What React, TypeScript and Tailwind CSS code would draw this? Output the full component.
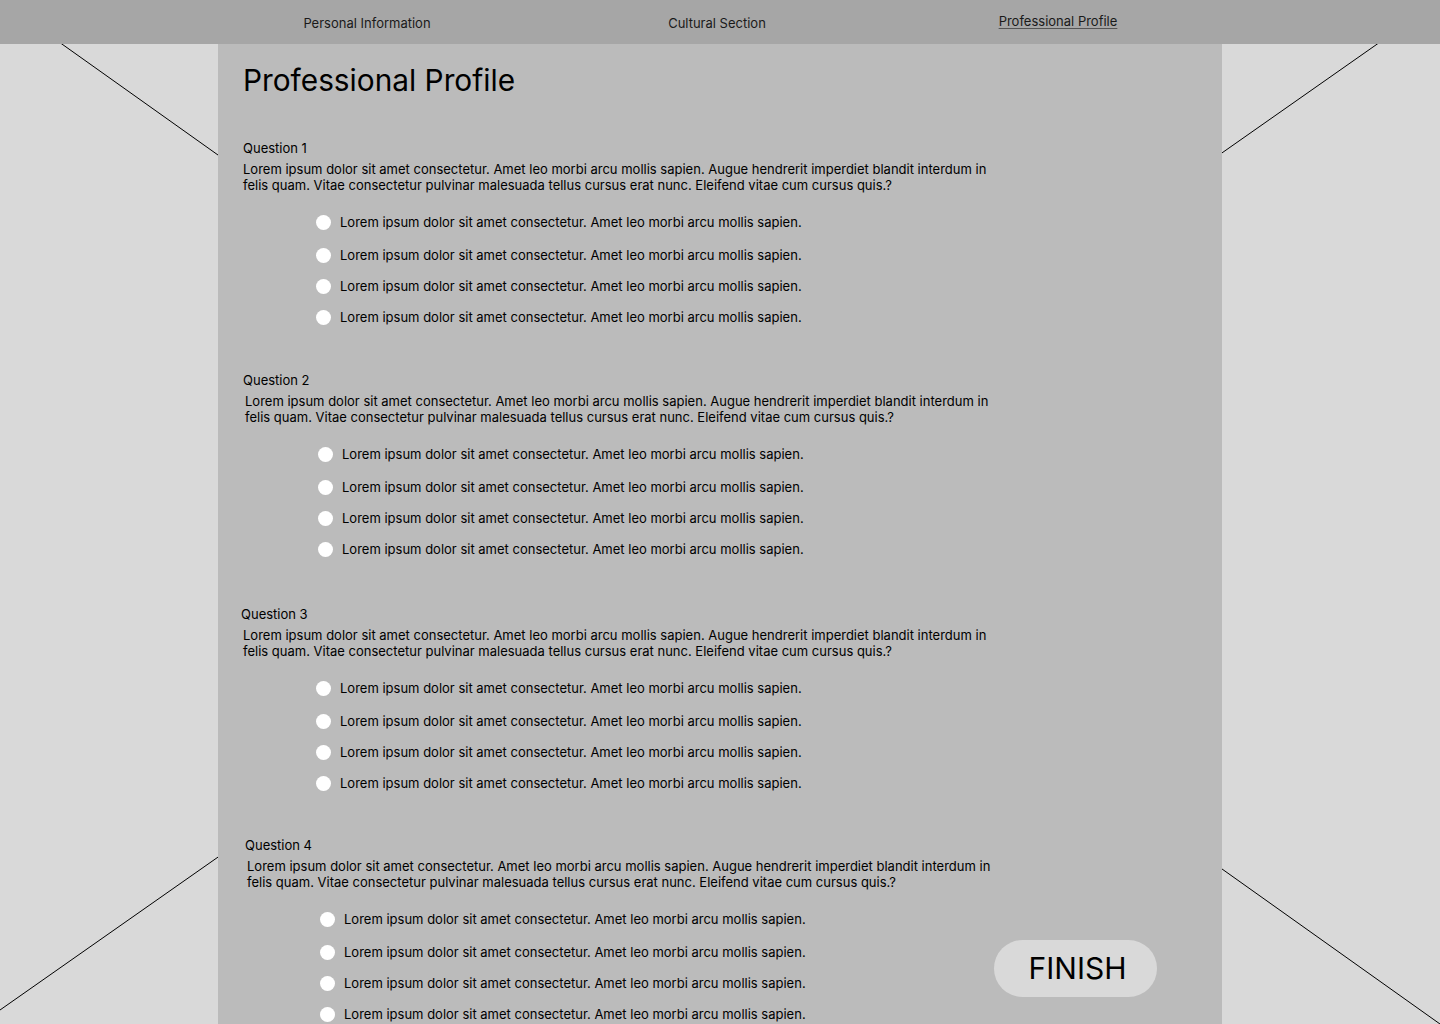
import React from 'react';

interface Question {
  label: string;
  labelX: number;
  textX: number;
  optionX: number;
  gapBefore: number;
}

const questionText = [
  'Lorem ipsum dolor sit amet consectetur. Amet leo morbi arcu mollis sapien. Augue hendrerit imperdiet blandit interdum in',
  'felis quam. Vitae consectetur pulvinar malesuada tellus cursus erat nunc. Eleifend vitae cum cursus quis.?',
];

const optionText = 'Lorem ipsum dolor sit amet consectetur. Amet leo morbi arcu mollis sapien.';

const questions: Question[] = [
  { label: 'Question 1', labelX: 0, textX: 0, optionX: 73, gapBefore: 42 },
  { label: 'Question 2', labelX: 0, textX: 2, optionX: 75, gapBefore: 47 },
  { label: 'Question 3', labelX: -2, textX: 0, optionX: 73, gapBefore: 49 },
  { label: 'Question 4', labelX: 2, textX: 4, optionX: 77, gapBefore: 46 },
];

const Options = ({ x }: { x: number }) => (
  <div className="flex flex-col mt-[21px]" style={{ marginLeft: x }}>
    {[0, 1, 2, 3].map((i) => (
      <label
        key={i}
        className={`flex items-center h-4 gap-[9px] ${i === 1 ? 'mt-[17px]' : i > 1 ? 'mt-[15px]' : ''}`}
      >
        <span className="w-[15px] h-[15px] rounded-full bg-white shrink-0" />
        <span className="text-[13px] leading-4 text-black whitespace-nowrap">{optionText}</span>
      </label>
    ))}
  </div>
);

const QuestionBlock = ({ q }: { q: Question }) => (
  <div className="flex flex-col">
    <p className="text-[13px] leading-4 text-black" style={{ marginLeft: q.labelX }}>
      {q.label}
    </p>
    <p className="mt-[5px] text-[13px] leading-4 text-black" style={{ marginLeft: q.textX }}>
      {questionText.map((line) => (
        <span key={line} className="block whitespace-nowrap">
          {line}
        </span>
      ))}
    </p>
    <Options x={q.optionX} />
  </div>
);

const App = () => {
  return (
    <div
      className="relative w-full h-[1024px] overflow-hidden bg-[#d9d9d9]"
      style={{ fontFamily: 'Inter, "Noto Sans", sans-serif' }}
    >
      {/* image placeholder cross */}
      <svg className="absolute inset-0" width="1440" height="1024" viewBox="0 0 1440 1024">
        <line x1="0" y1="0" x2="1440" y2="1024" stroke="#000" strokeWidth="1" />
        <line x1="0" y1="1010" x2="1440" y2="0" stroke="#000" strokeWidth="1" />
      </svg>

      <nav className="relative flex items-center h-[44px] bg-[#a6a6a6] pl-[267px] pt-1 text-[13px] text-[#1a1a1a]">
        <a className="w-[200px] text-center">Personal Information</a>
        <a className="w-[200px] ml-[150px] text-center">Cultural Section</a>
        <a className="w-[200px] ml-[141px] text-center -mt-1">
          <span className="underline decoration-[#555] underline-offset-2">Professional Profile</span>
        </a>
      </nav>

      <main className="relative mx-auto w-[1004px] h-[980px] bg-[#bbbbbb] pl-[25px] pt-[18px]">
        <h1 className="text-[29.8px] leading-9 text-black">Professional Profile</h1>

        {questions.map((q, i) =>
          i < 3 ? (
            <div key={q.label} style={{ marginTop: q.gapBefore }}>
              <QuestionBlock q={q} />
            </div>
          ) : (
            <div key={q.label} className="flex items-start" style={{ marginTop: q.gapBefore }}>
              <div className="w-[751px]">
                <QuestionBlock q={q} />
              </div>
              <button className="mt-[103px] w-[163px] h-[57px] rounded-full bg-[#d9d9d9] pl-1 text-[30px] text-black">
                FINISH
              </button>
            </div>
          )
        )}
      </main>
    </div>
  );
};

export default App;
